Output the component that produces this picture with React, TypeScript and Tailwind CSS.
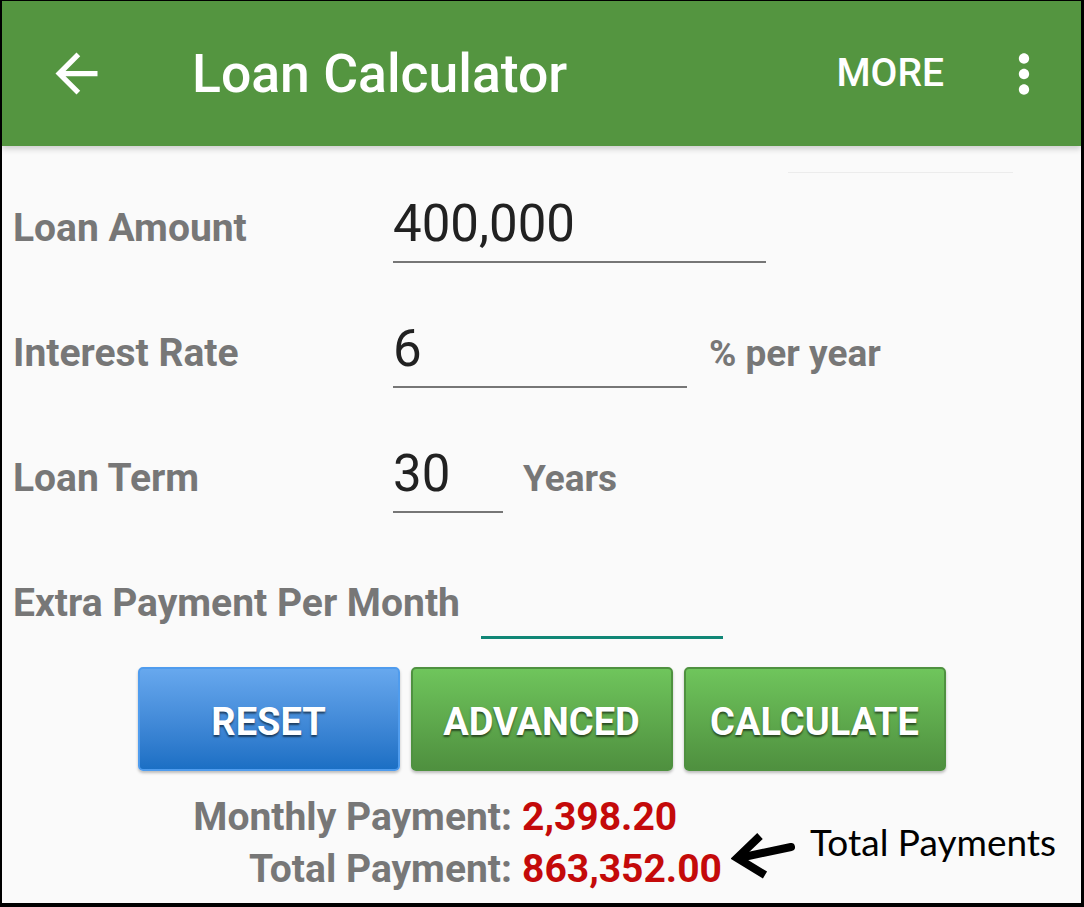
import React from 'react';

const labelFont = { fontFamily: 'Roboto, "Liberation Sans", sans-serif' };

const Field = ({ label, value, width, suffix, labelWidth = 'w-[391px]', active = false }: {
  label: string;
  value: string;
  width: string;
  suffix?: string;
  labelWidth?: string;
  active?: boolean;
}) => (
  <div className="flex items-baseline">
    <div className={`${labelWidth} pl-[11px] text-[39px] font-bold text-[#777777] leading-[46px] whitespace-nowrap`}>{label}</div>
    <div
      className={`${width} ${active ? 'border-b-[3px] border-[#108676]' : 'border-b-2 border-[#767676]'} pb-[7px] text-[51px] leading-[60px] text-[#212121]`}
    >
      {value || '\u00a0'}
    </div>
    {suffix && <div className="text-[37px] font-bold text-[#777777] leading-[46px] whitespace-nowrap">{suffix}</div>}
  </div>
);

const btn =
  'w-[262px] h-[104px] pt-[6px] rounded-[5px] border-2 text-white text-[38px] font-bold shadow-[0_2px_3px_rgba(0,0,0,0.25)] [text-shadow:0_2px_2px_rgba(0,0,0,0.55)]';

export default function App() {
  return (
    <div
      className="relative w-[1084px] h-[907px] overflow-hidden bg-[#fafafa] border-black border-l-2 border-t border-r-[3px] border-b-4 flex flex-col"
      style={labelFont}
    >
      <header className="relative z-10 h-[145px] shrink-0 bg-[#549540] flex items-center pl-[43px] pr-[26px] shadow-[0_3px_6px_rgba(0,0,0,0.18)]">
        <svg width="63" height="63" viewBox="0 0 24 24" fill="#ffffff">
          <path d="M20 11H7.83l5.59-5.59L12 4l-8 8 8 8 1.41-1.41L7.83 13H20v-2z" />
        </svg>
        <h1 className="ml-[84px] text-[53.5px] font-medium text-white leading-none">Loan Calculator</h1>
        <div className="flex-1" />
        <span className="text-[39px] font-medium text-white leading-none">MORE</span>
        <svg className="ml-[49px]" width="62" height="62" viewBox="0 0 24 24" fill="#ffffff">
          <path d="M12 8c1.1 0 2-.9 2-2s-.9-2-2-2-2 .9-2 2 .9 2 2 2zm0 2c-1.1 0-2 .9-2 2s.9 2 2 2 2-.9 2-2-.9-2-2-2zm0 6c-1.1 0-2 .9-2 2s.9 2 2 2 2-.9 2-2-.9-2-2-2z" />
        </svg>
      </header>

      <div className="ml-[786px] mt-[26px] w-[225px] h-px bg-[#ececec]" />

      <div className="mt-[21px] flex flex-col gap-[56px]">
        <Field label="Loan Amount" value="400,000" width="w-[373px]" />
        <Field label="Interest Rate" value="6" width="w-[294px] mr-[22px]" suffix="% per year" />
        <Field label="Loan Term" value="30" width="w-[110px] mr-[20px]" suffix="Years" />
        <Field label="Extra Payment Per Month" value="" width="w-[242px] ml-[21px]" labelWidth="w-auto" active />
      </div>

      <div className="mt-[28px] flex justify-center gap-[11px]">
        <button className={`${btn} border-[#4f9cee] bg-gradient-to-b from-[#67a8ee] to-[#1b6fc4]`}>RESET</button>
        <button className={`${btn} border-[#4f9140] bg-gradient-to-b from-[#6fc55c] to-[#4f903f]`}>ADVANCED</button>
        <button className={`${btn} border-[#4f9140] bg-gradient-to-b from-[#6fc55c] to-[#4f903f]`}>CALCULATE</button>
      </div>

      <div className="mt-[20px] grid grid-cols-[510px_1fr] gap-x-[10px] text-[39px] font-bold leading-[52px]">
        <div className="text-right text-[#777777]">Monthly Payment:</div>
        <div className="text-[#c40a0a]">2,398.20</div>
        <div className="text-right text-[#777777]">Total Payment:</div>
        <div className="text-[#c40a0a]">863,352.00</div>
      </div>

      <svg className="absolute left-[729px] top-[831px]" width="64" height="48" viewBox="0 0 64 48">
        <path d="M8 26 L60 15" stroke="#000" strokeWidth="8" strokeLinecap="round" fill="none" />
        <path d="M29 4 L6 26 L34 43" stroke="#000" strokeWidth="8" strokeLinecap="butt" strokeLinejoin="miter" fill="none" />
      </svg>
      <div
        className="absolute left-[808px] top-[818px] text-[37px] text-black leading-[46px] whitespace-nowrap"
        style={{ fontFamily: 'Lato, "Open Sans", sans-serif' }}
      >
        Total Payments
      </div>
    </div>
  );
}
